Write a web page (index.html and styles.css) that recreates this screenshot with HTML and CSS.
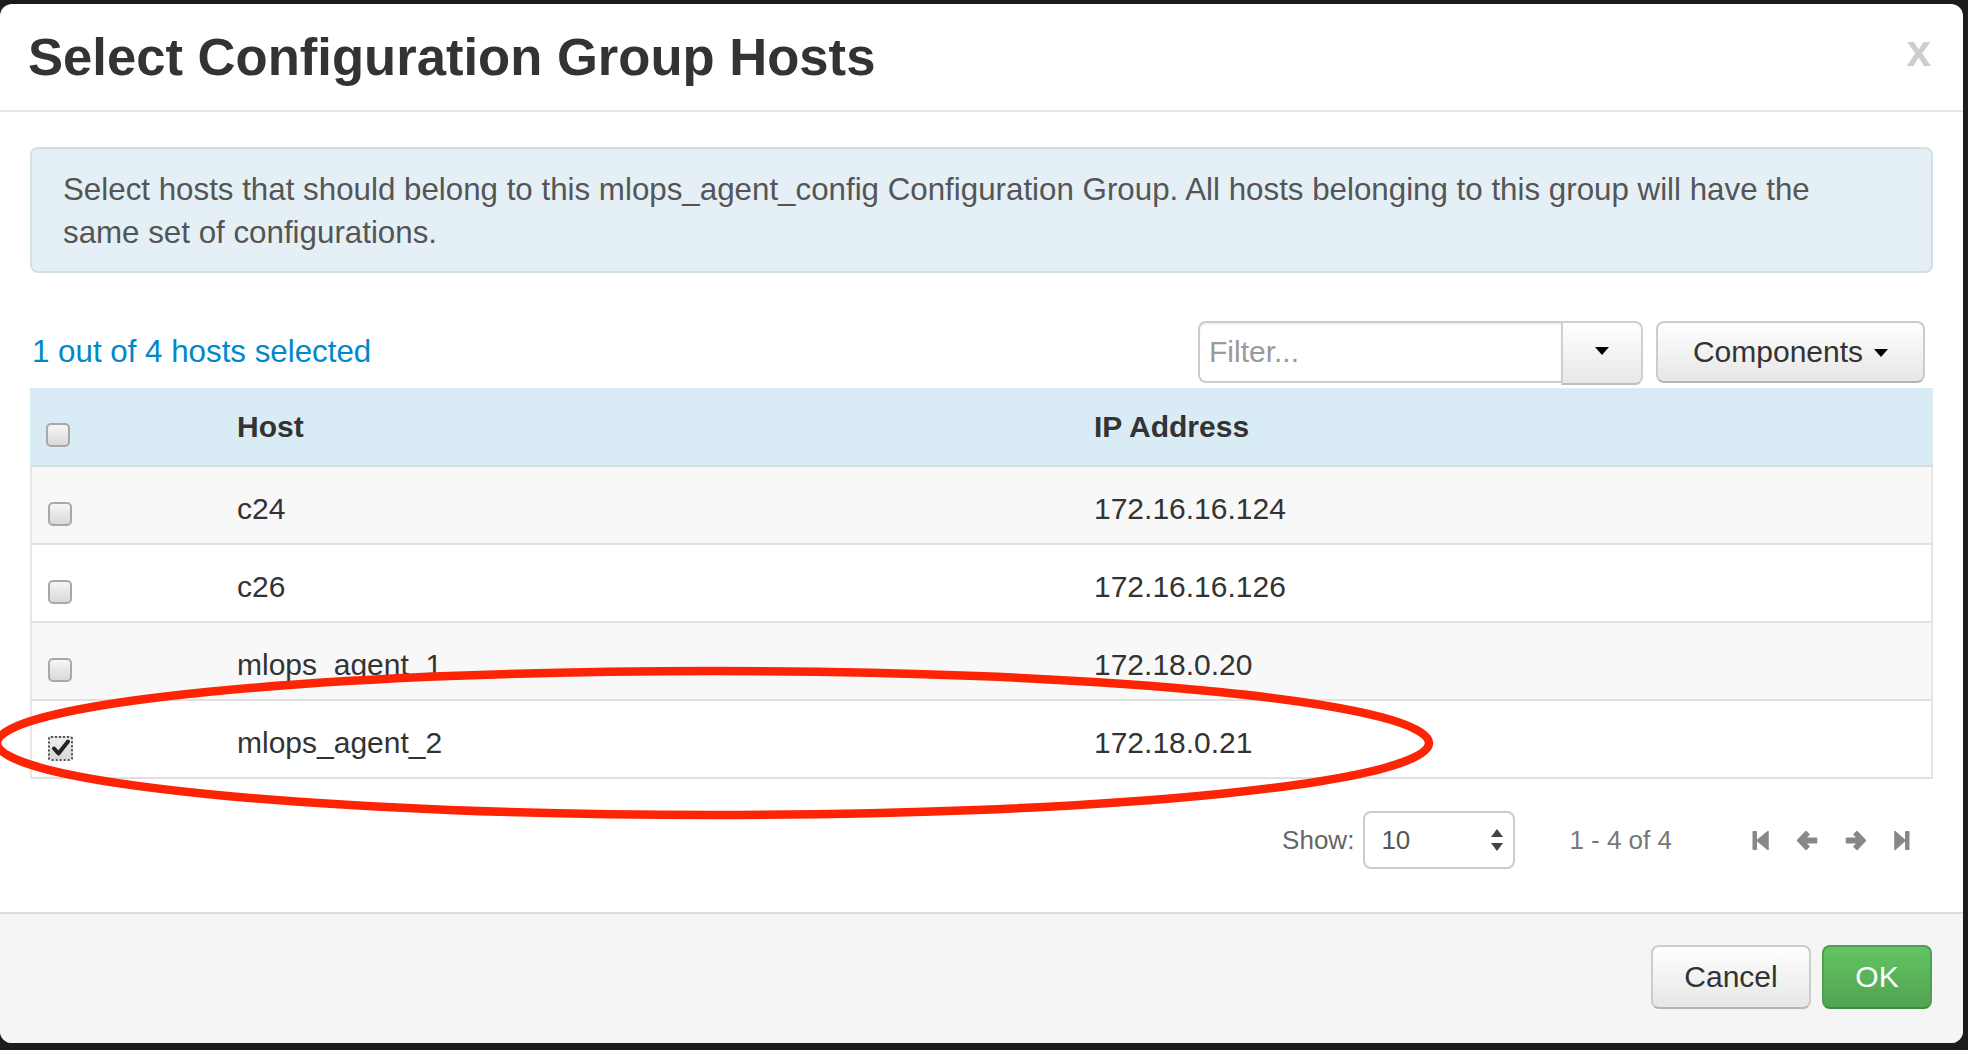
FILE: index.html
```html
<!DOCTYPE html>
<html lang="en">
<head>
<meta charset="utf-8">
<title>Select Configuration Group Hosts</title>
<link rel="stylesheet" href="styles.css">
</head>
<body>
<div class="modal">
  <div class="modal-header">
    <h3 class="modal-title">Select Configuration Group Hosts</h3>
    <span class="close">x</span>
  </div>
  <div class="modal-body">
    <div class="alert">Select hosts that should belong to this mlops_agent_config Configuration Group. All hosts belonging to this group will have the<br>same set of configurations.</div>
    <div class="toolbar">
      <span class="selected-count">1 out of 4 hosts selected</span>
      <div class="tools">
        <div class="filter-group">
          <input class="filter-input" type="text" placeholder="Filter...">
          <button class="filter-toggle"><span class="caret"></span></button>
        </div>
        <button class="btn btn-components">Components <span class="caret"></span></button>
      </div>
    </div>
    <table class="hosts">
      <colgroup><col class="c-check"><col class="c-host"><col></colgroup>
      <thead>
        <tr><th class="check"><span class="cb"></span></th><th>Host</th><th>IP Address</th></tr>
      </thead>
      <tbody>
        <tr><td class="check"><span class="cb"></span></td><td>c24</td><td>172.16.16.124</td></tr>
        <tr><td class="check"><span class="cb"></span></td><td>c26</td><td>172.16.16.126</td></tr>
        <tr><td class="check"><span class="cb"></span></td><td>mlops_agent_1</td><td>172.18.0.20</td></tr>
        <tr><td class="check"><span class="cb checked"><svg viewBox="0 0 20 20" width="20" height="20"><path d="M3 10.5 L7.5 15.5 L17 3.5" fill="none" stroke="#222" stroke-width="4" stroke-linecap="round" stroke-linejoin="round"/></svg></span></td><td>mlops_agent_2</td><td>172.18.0.21</td></tr>
      </tbody>
    </table>
    <div class="pager">
      <span class="show-label">Show:</span>
      <div class="page-size"><span>10</span><span class="updown"><span class="up"></span><span class="down"></span></span></div>
      <span class="range">1 - 4 of 4</span>
      <div class="nav">
        <svg class="ico ico-first" viewBox="0 0 17 21" width="17" height="21"><rect x="0.5" y="1" width="4.5" height="19" rx="1" fill="#888"/><path d="M16 1.5 L16 19.5 L5 10.5 Z" fill="#888" stroke="#888" stroke-width="1.5" stroke-linejoin="round"/></svg>
        <svg class="ico ico-arrow" viewBox="0 0 22 21" width="22" height="21"><path d="M10 1.5 L1.5 10.5 L10 19.5 L13 16.5 L9.2 12.8 L20.5 12.8 L20.5 8.2 L9.2 8.2 L13 4.5 Z" fill="#888" stroke="#888" stroke-width="1.5" stroke-linejoin="round"/></svg>
        <svg class="ico ico-arrow" viewBox="0 0 22 21" width="22" height="21"><path d="M12 1.5 L20.5 10.5 L12 19.5 L9 16.5 L12.8 12.8 L1.5 12.8 L1.5 8.2 L12.8 8.2 L9 4.5 Z" fill="#888" stroke="#888" stroke-width="1.5" stroke-linejoin="round"/></svg>
        <svg class="ico ico-last" viewBox="0 0 16 21" width="16" height="21"><path d="M1 1.5 L1 19.5 L11 10.5 Z" fill="#888" stroke="#888" stroke-width="1.5" stroke-linejoin="round"/><rect x="11" y="1" width="4.5" height="19" rx="1" fill="#888"/></svg>
      </div>
    </div>
  </div>
  <div class="modal-footer">
    <button class="btn btn-cancel">Cancel</button>
    <button class="btn btn-success">OK</button>
  </div>
</div>
<svg class="annotation" viewBox="0 0 1968 1050" width="1968" height="1050"><ellipse cx="713" cy="743" rx="716" ry="72" fill="none" stroke="#fd2305" stroke-width="8.5"/></svg>
</body>
</html>
```
FILE: styles.css
```css
* { box-sizing: border-box; }
html, body { margin: 0; padding: 0; }
body {
  background: #1c1c1c;
  font-family: "Liberation Sans", Arial, sans-serif;
  color: #333;
  width: 1968px;
  height: 1050px;
  overflow: hidden;
  position: relative;
}
.modal {
  margin-top: 4px;
  width: 1963px;
  height: 1039px;
  background: #fff;
  border-radius: 12px;
  overflow: hidden;
  display: flex;
  flex-direction: column;
}
.modal-header {
  height: 108px;
  flex: none;
  border-bottom: 2px solid #e5e5e5;
  display: flex;
  justify-content: space-between;
  align-items: flex-start;
  padding: 0 32px 0 28px;
}
.modal-title {
  margin: 0;
  font-size: 52.6px;
  font-weight: bold;
  line-height: 106px;
  color: #333;
}
.close {
  font-size: 44px;
  font-weight: bold;
  line-height: 94px;
  color: #cdcdcd;
}
.modal-body {
  flex: 1;
  padding: 35px 30px 0 30px;
}
.alert {
  height: 126px;
  background: #e4f0f6;
  border: 2px solid #d2dfe6;
  border-radius: 8px;
  padding: 19px 30px 17px 31px;
  font-size: 31.3px;
  line-height: 43px;
  color: #555;
}
.toolbar {
  margin-top: 48px;
  margin-bottom: 5px;
  height: 62px;
  display: flex;
  justify-content: space-between;
  align-items: center;
}
.selected-count {
  color: #0088cc;
  font-size: 31.3px;
  padding-left: 2px;
}
.tools {
  display: flex;
  align-items: flex-start;
  gap: 13px;
  margin-right: 8px;
  align-self: flex-start;
}
.filter-group { display: flex; align-items: flex-start; }
.filter-input {
  width: 363px;
  height: 62px;
  border: 2px solid #ccc;
  border-right: 0;
  border-radius: 8px 0 0 8px;
  font: 30px "Liberation Sans", Arial, sans-serif;
  padding: 0 9px;
  color: #555;
  outline: none;
  box-shadow: inset 0 2px 2px rgba(0,0,0,0.06);
}
.filter-input::placeholder { color: #9a9a9a; }
.filter-toggle {
  width: 82px;
  height: 64px;
  border: 2px solid #cfcfcf;
  border-bottom-color: #bdbdbd;
  border-radius: 0 8px 8px 0;
  background: linear-gradient(#ffffff, #e8e8e8);
  display: flex;
  align-items: center;
  justify-content: center;
  padding: 0 0 4px 0;
}
.caret {
  display: inline-block;
  width: 0;
  height: 0;
  border-top: 8px solid #000;
  border-left: 7px solid transparent;
  border-right: 7px solid transparent;
}
.btn {
  font: 30px "Liberation Sans", Arial, sans-serif;
  color: #333;
  background: linear-gradient(#ffffff, #e6e6e6);
  border: 2px solid #cccccc;
  border-bottom-color: #b5b5b5;
  border-radius: 8px;
  display: inline-flex;
  align-items: center;
  justify-content: center;
  padding: 0;
}
.btn-components {
  width: 269px;
  height: 62px;
  gap: 11px;
}
.btn-components .caret { margin-top: 2px; }
.hosts {
  width: 100%;
  border-collapse: separate;
  border-spacing: 0;
  table-layout: fixed;
  font-size: 30px;
}
.c-check { width: 207px; }
.c-host { width: 857px; }
.hosts th, .hosts td {
  padding: 0;
  text-align: left;
  vertical-align: middle;
  color: #333;
}
.hosts th {
  height: 79px;
  background: #d9ebf5;
  font-weight: bold;
  border-bottom: 2px solid #dcdcdc;
}
.hosts td {
  height: 78px;
  padding-top: 8px;
  border-bottom: 2px solid #e0e0e0;
}
.hosts tbody tr:nth-child(odd) td { background: #f8f8f8; }
.hosts tbody td:first-child { border-left: 2px solid #e6e6e6; }
.hosts tbody td:last-child { border-right: 2px solid #e6e6e6; }
.hosts .check { padding: 6px 0 0 16px; }
.cb {
  display: inline-block;
  width: 24px;
  height: 24px;
  border: 2px solid #a8a8a8;
  border-radius: 5px;
  background: linear-gradient(#f6f6f6, #d9d9d9);
  vertical-align: -8px;
}
.cb.checked {
  width: 25px;
  height: 25px;
  border: 2px dotted #555;
  border-radius: 3px;
  background: linear-gradient(#eeeeee, #d6d6d6);
  display: inline-flex;
  align-items: center;
  justify-content: center;
}
.pager {
  margin-top: 32px;
  height: 58px;
  display: flex;
  justify-content: flex-end;
  align-items: center;
  font-size: 26px;
  color: #777;
  padding-right: 23px;
}
.show-label { margin-right: 9px; color: #666; }
.page-size {
  width: 152px;
  height: 58px;
  border: 2px solid #cccccc;
  border-radius: 8px;
  display: flex;
  align-items: center;
  justify-content: space-between;
  padding: 0 10px 0 16px;
  color: #555;
}
.updown { display: flex; flex-direction: column; gap: 6px; }
.up, .down {
  width: 0;
  height: 0;
  border-left: 6px solid transparent;
  border-right: 6px solid transparent;
}
.up { border-bottom: 8px solid #444; }
.down { border-top: 8px solid #444; }
.range { margin-left: 54px; margin-right: 80px; color: #777; }
.nav { display: flex; align-items: center; gap: 27px; }
.ico { display: block; }
.modal-footer {
  height: 131px;
  flex: none;
  border-top: 2px solid #dddddd;
  background: #f5f5f5;
  display: flex;
  justify-content: flex-end;
  align-items: flex-start;
  gap: 11px;
  padding: 31px 31px 0 0;
}
.btn-cancel { width: 160px; height: 64px; }
.btn-success {
  width: 110px;
  height: 64px;
  color: #fff;
  background: linear-gradient(#62c462, #51a351);
  border-color: #4f9f4f;
  border-bottom-color: #3f8a3f;
}
.annotation {
  position: absolute;
  top: 0;
  left: 0;
  pointer-events: none;
}
```
